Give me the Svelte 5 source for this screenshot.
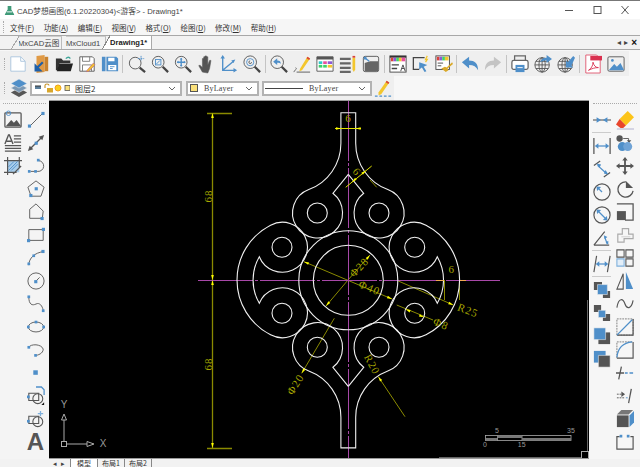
<script>
  const menus = [['文件','F'],['功能','A'],['编辑','E'],['视图','V'],['格式','O'],['绘图','D'],['修改','M'],['帮助','H']];

  // dimension arrow heads: tip position and direction in degrees
  const arrows = [
    [212.500,113,-90],[212.500,280,90],[212.500,280,-90],[212.500,448,90],
    [341,128.500,0],[355.700,128.500,180],
    [352,182,141],[366,170.500,-39],
    [370,255,-49],[326,306,131],
    [304,261.700,203],[392,299,23],
    [301.700,373.300,121],[453.300,305,23.500],
    [405.500,309.300,203],[424,317.300,23],
    [378.300,376.700,235]
  ];

  const labels = [
    ['68',209.500,196,-90],['68',209.500,364,-90],
    ['6',348.500,119,0],['6',356,172.500,50],
    ['Φ28',360,268,-47],['Φ40',369,289,23],
    ['Φ20',296.500,385,-58],['R25',467.500,311.500,21],
    ['Φ8',440.500,325,23],['6',451.700,270.700,0],['R20',371,365,62]
  ];

  const holes = [[317.300,213],[379,213],[282,247.300],[414.700,247.300],[282,313.300],[414.700,313.300],[317.300,347.300],[379,347.300]];
</script>

<div class="app">
  <header class="title">
    <svg class="logo" viewBox="0 0 12 12"><path d="M4 1h4v4l3 5v1H1v-1l3-5z" fill="#3f9a78"/><path d="M3 7h6v1H3z" fill="#fff"/></svg>
    <span class="name">CAD梦想画图(6.1.20220304)&lt;游客&gt; - Drawing1*</span>
    <div class="win">
      <svg viewBox="0 0 10 10"><path d="M1 5.500h8" stroke="#555"/></svg>
      <svg viewBox="0 0 10 10"><rect x="2" y="1.500" width="7" height="7" fill="none" stroke="#555"/></svg>
      <svg viewBox="0 0 10 10"><path d="M1.500 1l7 8M8.500 1l-7 8" stroke="#555"/></svg>
    </div>
  </header>

  <nav class="menu">
    <span class="grip-v"></span>
    {#each menus as [label, key]}
      <span class="menu-item">{label}(<u>{key}</u>)</span>
    {/each}
  </nav>

  <div class="tabs">
    <span class="tab first">MxCAD云图</span>
    <span class="tab second">MxCloud1</span>
    <span class="tab active">Drawing1*</span>
    <div class="tab-ctl"><span>◂</span><span>▸</span><b>×</b></div>
  </div>

  <div class="tb1">
    <div class="strip">
      <span class="grip-v"></span>
      <!-- new -->
      <span class="btn"><svg class="ico" viewBox="0 0 20 20"><path d="M2 2h11l5 5v11H2z" fill="#fff" stroke="#a9c4dc"/><path d="M13 2v5h5" stroke="#a9c4dc"/></svg></span>
      <!-- open drawing -->
      <span class="btn"><svg class="ico" viewBox="0 0 20 20"><path d="M5 1l9-1v19l-9 1z" fill="#e09a45" stroke="none"/><path d="M14 2h4v16h-4z" fill="#c9832f" stroke="none"/><path d="M12 8l-6 6M4 12v5h5z" stroke="#1e5fa8" stroke-width="2.400" fill="#1e5fa8"/></svg></span>
      <!-- folder -->
      <span class="btn"><svg class="ico" viewBox="0 0 20 20"><path d="M1 4h6l2 2h8v3H5l-2 8H1z" fill="#333" stroke="none"/><path d="M4.500 9.500H20l-2.500 8.500H2z" fill="#222" stroke="none"/><path d="M12 4c2-2 4-2 5 0" stroke="#3fa598" stroke-width="1.400"/></svg></span>
      <!-- save with pencil -->
      <span class="btn"><svg class="ico" viewBox="0 0 20 20"><path d="M2 2h14l2 2v14H2z" fill="#fff"/><path d="M5 2v5h8V2M5 18v-7h10v7" stroke="#777"/><path d="M10 17l7-8 2 2-7 7-2.500.5z" fill="#f0c330" stroke="#b58" stroke-width=".6"/></svg></span>
      <!-- save as -->
      <span class="btn"><svg class="ico" viewBox="0 0 20 20"><path d="M1 2h4v16H1zM6 2h11l2 2v14H6z" fill="#4f8fc9" stroke="none"/><path d="M8 3h7v4H8zM8 11h9v6H8z" fill="#fff" stroke="none"/><path d="M10 13h5M10 15h3" stroke="#4f8fc9"/></svg></span>
      <i class="sep"></i>
      <!-- zoom window -->
      <span class="btn"><svg class="ico" viewBox="0 0 20 20"><circle cx="8" cy="9" r="6.500"/><path d="M13 14l6 5" class="hd"/><path d="M11 4h7M14.500 1v6" stroke="#4f8fc9" stroke-dasharray="2 1"/></svg></span>
      <span class="btn"><svg class="ico" viewBox="0 0 20 20"><circle cx="8" cy="8" r="6.500"/><path d="M13 13l6 6" class="hd"/><rect x="5" y="5" width="6" height="6" stroke="#4f8fc9"/><path d="M6 10l4-4" stroke="#4f8fc9"/></svg></span>
      <span class="btn"><svg class="ico" viewBox="0 0 20 20"><circle cx="8" cy="8" r="6.500"/><path d="M13 13l6 6" class="hd"/><path d="M8 3.500v9M3.500 8h9" stroke="#4f8fc9" stroke-width="1.500"/><path d="M8 3l-1.500 2h3zM8 13l-1.500-2h3zM3 8l2-1.500v3zM13 8l-2-1.500v3z" class="bl"/></svg></span>
      <!-- hand -->
      <span class="btn"><svg class="ico" viewBox="0 0 20 20"><path d="M6 19l-4-7 1-1 3 3V4h1.500v6V2H9v8-9h1.500v9-8H12v9l2-5h1.500l-1.500 9-2 5z" fill="#555" stroke="#555" stroke-width=".6"/></svg></span>
      <!-- axes -->
      <span class="btn"><svg class="ico" viewBox="0 0 20 20"><path d="M3 2v15h14M3 17l12-10" stroke="#4f8fc9" stroke-width="1.500"/><path d="M3 0l-2.500 4h5zM19 17l-4-2.500v5zM17 5l-4.500 1 2.500 3z" class="bl"/></svg></span>
      <span class="btn"><svg class="ico" viewBox="0 0 20 20"><circle cx="8" cy="8" r="7"/><circle cx="8" cy="8" r="4" stroke="#4f8fc9"/><path d="M13 13l6 6" class="hd"/><path d="M8 6.500a1.500 1.500 0 1 0 1.500 1.500" stroke="#555"/></svg></span>
      <i class="sep"></i>
      <span class="btn"><svg class="ico" viewBox="0 0 20 20"><circle cx="8" cy="8" r="7"/><path d="M13 13l6 6" class="hd"/><path d="M3.500 7.500L8 3.500v2.500c3 0 4 1 4 4-1-1.500-2-1.500-4-1.500v2.500z" class="bl"/></svg></span>
      <!-- pencil -->
      <span class="btn"><svg class="ico" viewBox="0 0 20 20"><path d="M8 15L16 2l3 2-9 13-3 1z" fill="#f3c62d" stroke="none"/><path d="M16 2l3 2-1 1.500-3-2z" fill="#d9433a" stroke="none"/><path d="M1 19c1-3 4-3 2-5M4 19h15" stroke="#555"/></svg></span>
      <!-- table -->
      <span class="btn"><svg class="ico" viewBox="0 0 20 20"><path d="M1 2h18v16H1z" fill="#fff"/><path d="M1 2h18v3H1z" fill="#555" stroke="none"/><path d="M3 7h4v3H3z" fill="#2fc9c9" stroke="none"/><path d="M8 7h4v3H8z" fill="#e94f9d" stroke="none"/><path d="M13 7h5v3h-5z" fill="#8c5ad6" stroke="none"/><path d="M3 11h4v3H3z" fill="#3ed26a" stroke="none"/><path d="M8 11h4v3H8z" fill="#3ed26a" stroke="none"/><path d="M13 11h5v3h-5z" fill="#f3c62d" stroke="none"/></svg></span>
      <span class="btn"><svg class="ico" viewBox="0 0 20 20"><path d="M1 3h12v2.500H1zM1 8h12v2.500H1zM1 13h12v2.500H1zM1 17.500h12V20H1z" fill="#666" stroke="none"/><path d="M15 3h3v13l-1.500 3-1.500-3z" fill="#f3c62d" stroke="none"/><path d="M15 1h3v2h-3z" fill="#d9433a" stroke="none"/></svg></span>
      <span class="btn"><svg class="ico" viewBox="0 0 20 20"><rect x="1.500" y="1.500" width="17" height="17" rx="2"/><path d="M9 7h9v11H3V9z" fill="#666" stroke="none"/><path d="M3 3l5 4" stroke="#4f8fc9" stroke-width="1.500"/><path d="M2 2h3v3H2z" class="bl"/></svg></span>
      <i class="sep"></i>
      <!-- colour book -->
      <span class="btn"><svg class="ico" viewBox="0 0 20 20"><rect x="1" y="1" width="18" height="18" fill="#fff" stroke="#444"/><path d="M1 1h18v2H1z" fill="#333" stroke="none"/><path d="M2 3h3v4H2z" fill="#d9433a" stroke="none"/><path d="M5 3h3v4H5z" fill="#8c5ad6" stroke="none"/><path d="M8 3h3v4H8z" fill="#3ed26a" stroke="none"/><path d="M11 3h3v4h-3z" fill="#f3c62d" stroke="none"/><path d="M14 3h4v4h-4z" fill="#e94f9d" stroke="none"/><path d="M3 11h8M3 15h6" stroke="#444" stroke-width="1.400"/><path d="M13 18l2.500-7 2.500 7M14 15h3" stroke="#444"/></svg></span>
      <!-- select -->
      <span class="btn"><svg class="ico" viewBox="0 0 20 20"><path d="M14 3H1.500v13H8" stroke="#444" stroke-width="1.400"/><path d="M8 8l9 3-4 2 3 5-2 1-3-5-3 2z" class="bl"/><path d="M17 1l-2 4h2l-2 3" stroke="#f3c62d" stroke-width="1.400"/></svg></span>
      <!-- brush -->
      <span class="btn"><svg class="ico" viewBox="0 0 20 20"><rect x="1" y="1" width="15" height="15" fill="#fff" stroke="#444"/><path d="M2 2h3v4H2z" fill="#d9433a" stroke="none"/><path d="M5 2h3v4H5z" fill="#8c5ad6" stroke="none"/><path d="M8 2h3v4H8z" fill="#3ed26a" stroke="none"/><path d="M11 2h4v4h-4z" fill="#f3c62d" stroke="none"/><path d="M3 9h6M3 12h4" stroke="#444"/><path d="M19 8l1 2-6 5 1 2-3 2-5-4 4-2 2 1z" fill="#d9a92a" stroke="none"/></svg></span>
      <i class="sep"></i>
      <!-- undo redo -->
      <span class="btn"><svg class="ico" viewBox="0 0 20 20"><path d="M1 8l8-6v4c6 0 10 3 10 11-2-4-5-6-10-6v4z" class="bl"/></svg></span>
      <span class="btn"><svg class="ico" viewBox="0 0 20 20"><path d="M19 8l-8-6v4C5 6 1 9 1 17c2-4 5-6 10-6v4z" fill="#c4c4c4" stroke="none"/></svg></span>
      <i class="sep"></i>
      <!-- print -->
      <span class="btn"><svg class="ico" viewBox="0 0 20 20"><path d="M4 6V1h12v5" stroke="#666" stroke-width="1.400"/><rect x="1" y="6" width="18" height="10" rx="2" stroke="#666" stroke-width="1.400" fill="#fff"/><path d="M5 11h10v8H5z" class="bl"/><path d="M7 14h6" stroke="#fff"/></svg></span>
      <!-- globes -->
      <span class="btn"><svg class="ico" viewBox="0 0 20 20"><circle cx="9" cy="11" r="8"/><ellipse cx="9" cy="11" rx="3.500" ry="8"/><path d="M1 11h16M2 7h14M2 15h14M9 3v16"/><path d="M7 8c1-4 4-5 7-5V0l6 4.500L14 9V6c-3 0-5 .5-7 2z" class="bl"/></svg></span>
      <span class="btn"><svg class="ico" viewBox="0 0 20 20"><circle cx="9" cy="11" r="8"/><ellipse cx="9" cy="11" rx="3.500" ry="8"/><path d="M1 11h16M2 7h14M2 15h14M9 3v16"/><path d="M18 1l-6 7-2-2v8h8l-2-2 4-9z" class="bl"/></svg></span>
      <i class="sep"></i>
      <!-- pdf -->
      <span class="btn"><svg class="ico" viewBox="0 0 20 20"><path d="M2 0h12l4 4v16H2z" fill="#fff" stroke="#e0566e"/><path d="M7 1h13v5H7z" fill="#d9304f" stroke="none"/><path d="M5 17c3-2 5-5 5-9 1 4 3 6 6 6-4 0-7 1-11 3z" stroke="#d9304f"/></svg></span>
      <!-- picture -->
      <span class="btn"><svg class="ico" viewBox="0 0 20 20"><rect x="1" y="2" width="18" height="16" rx="1.500"/><path d="M2 17l6-7 3 3 4-4 4 8z" class="bl"/><circle cx="6" cy="6" r="1.500" class="bl"/></svg></span>
    </div>
  </div>

  <div class="tb2">
    <div class="strip2">
      <span class="grip-v"></span>
      <svg class="layers" viewBox="0 0 20 20"><path d="M10 10l9 5-9 5-9-5z" fill="#555"/><path d="M10 5l9 5-9 5-9-5z" fill="#7a98b4" stroke="#eee" stroke-width=".6"/><path d="M10 0l9 5-9 5-9-5z" fill="#4f8fc9" stroke="#eee" stroke-width=".6"/></svg>
      <div class="combo c1">
        <svg class="state" viewBox="0 0 36 10">
          <path d="M1 3h6v3H1z" fill="#5b7f9c"/><path d="M1 3h6" stroke="#333"/>
          <path d="M11 5V2.500c0-2 4-2 4 0" fill="none" stroke="#c8962e" stroke-width="1.200"/><path d="M13 5h6v4.500h-6z" fill="#d9a72c"/>
          <circle cx="24" cy="5" r="3" fill="#fbd01c" stroke="#f0a020"/>
          <rect x="31" y="2.500" width="5" height="5" fill="#fae07a" stroke="#555" stroke-width=".8"/>
        </svg>
        <span class="layer-name">图层2</span>
        <svg class="chev" viewBox="0 0 8 5"><path d="M1 1l3 3 3-3" fill="none" stroke="#666"/></svg>
      </div>
      <div class="combo c2">
        <span class="swatch"></span>
        <span class="by">ByLayer</span>
        <svg class="chev" viewBox="0 0 8 5"><path d="M1 1l3 3 3-3" fill="none" stroke="#666"/></svg>
      </div>
      <div class="combo c3">
        <span class="rule"></span>
        <span class="by">ByLayer</span>
        <svg class="chev" viewBox="0 0 8 5"><path d="M1 1l3 3 3-3" fill="none" stroke="#666"/></svg>
      </div>
      <svg class="pen" viewBox="0 0 20 20"><path d="M5 15L14 2l3 2-9 13-3 1z" fill="#f3c62d"/><path d="M14 2l3 2-1 1.500-3-2z" fill="#d9433a"/><path d="M1 19h18" stroke="#4f8fc9" stroke-width="1.400" stroke-dasharray="3 2"/></svg>
    </div>
  </div>

  <div class="main">
    <aside class="left">
      <span class="grip-h"></span>
      <div class="cols">
        <div class="col">
          <span class="cell"><svg class="ico" viewBox="0 0 20 20"><rect x="1" y="2" width="18" height="16" rx="1" stroke-width="1.400"/><path d="M2 17l6-7 3 3 3-3 5 7z" fill="#555" stroke="none"/><circle cx="5" cy="2.500" r="2.500" stroke="#4f8fc9"/></svg></span>
          <span class="cell"><svg class="ico" viewBox="0 0 20 20"><path d="M1 11L5 1h1l4 10M3 8h5" stroke-width="1.500"/><path d="M11 2h8M11 5.500h8M11 9h8M1 13h18M1 16h18M1 19h18" stroke-width="1.300"/></svg></span>
          <span class="cell"><svg class="ico" viewBox="0 0 20 20"><path d="M4 4h13v13H4z" fill="#a9cdea" stroke="none"/><path d="M5 15L15 5M8 15l7-7M5 11l6-6" stroke="#4f8fc9"/><path d="M0 4h20M0 17h14M4 0v20M17 0v12M10 19l9-9" stroke-width="1.300"/></svg></span>
        </div>
        <div class="col">
          <span class="cell"><svg class="ico" viewBox="0 0 20 20"><path d="M3 17L17 3"/><rect x="1" y="15" width="3.500" height="3.500" class="bl"/><rect x="16" y="1" width="3.500" height="3.500" class="bl"/></svg></span>
          <span class="cell"><svg class="ico" viewBox="0 0 20 20"><path d="M3 17L17 3" stroke-width="1.400"/><path d="M1 19l2-6 4 4zM19 1l-6 2 4 4z" fill="#555" stroke="none"/><rect x="8.500" y="8.500" width="3.500" height="3.500" class="bl"/></svg></span>
          <span class="cell"><svg class="ico" viewBox="0 0 20 20"><path d="M4 16h8a6 6 0 0 0 1-12"/><rect x="1" y="14.500" width="3" height="3" class="bl"/><rect x="8" y="14.500" width="3" height="3" class="bl"/><rect x="11" y="2" width="3" height="3" class="bl"/></svg></span>
          <span class="cell"><svg class="ico" viewBox="0 0 20 20"><path d="M10 1l9 7-3.500 10h-11L1 8z"/><rect x="8.500" y="8" width="3.500" height="3.500" class="bl"/><rect x="2.500" y="15.500" width="3.500" height="3.500" class="bl"/></svg></span>
          <span class="cell"><svg class="ico" viewBox="0 0 20 20"><path d="M10 1l8 8-1 8H3V7z"/><rect x="15" y="15.500" width="3.500" height="3.500" class="bl"/></svg></span>
          <span class="cell"><svg class="ico" viewBox="0 0 20 20"><path d="M2 4h16v12H2z"/><rect x="0" y="14.500" width="3.500" height="3.500" class="bl"/><rect x="16.500" y="2" width="3.500" height="3.500" class="bl"/></svg></span>
          <span class="cell"><svg class="ico" viewBox="0 0 20 20"><path d="M2 18c0-8 7-14 16-15"/><rect x="0.500" y="15" width="3" height="3" class="bl"/><rect x="6" y="6" width="3" height="3" class="bl"/><rect x="16" y="1" width="3.500" height="3.500" class="bl"/></svg></span>
          <span class="cell"><svg class="ico" viewBox="0 0 20 20"><circle cx="10" cy="10" r="9"/><path d="M10 10l4-4" stroke="#555"/><rect x="8" y="9" width="3.500" height="3.500" class="bl"/></svg></span>
          <span class="cell"><svg class="ico" viewBox="0 0 20 20"><path d="M2 2c0 9 4 10 8 8s7 2 8 7"/><rect x="0.500" y="0.500" width="3" height="3" class="bl"/><rect x="16.500" y="16" width="3" height="3" class="bl"/></svg></span>
          <span class="cell"><svg class="ico" viewBox="0 0 20 20"><ellipse cx="10" cy="10" rx="8.500" ry="5.500"/><rect x="8.500" y="3" width="3" height="3" class="bl"/><rect x="0" y="8.500" width="3" height="3" class="bl"/><rect x="17" y="8.500" width="3" height="3" class="bl"/></svg></span>
          <span class="cell"><svg class="ico" viewBox="0 0 20 20"><path d="M2 7c2-4 14-4 16 2 0 5-6 7-9 7"/><rect x="0.500" y="5.500" width="3" height="3" class="bl"/><rect x="8" y="14.500" width="3" height="3" class="bl"/></svg></span>
          <span class="cell"><svg class="ico" viewBox="0 0 20 20"><rect x="7" y="7" width="5" height="5" class="bl"/></svg></span>
          <span class="cell"><svg class="ico" viewBox="0 0 20 20"><path d="M10 0h6l3 3v6" stroke="#4f8fc9" stroke-width="1.400"/><path d="M2 7h11v8H2z" stroke-width="1.200"/><circle cx="12" cy="13" r="5.500" stroke-width="1.200"/><rect x="0" y="9.500" width="3" height="3" class="bl"/><path d="M16 20l3-3v3z" fill="#111" stroke="none"/></svg></span>
          <span class="cell"><svg class="ico" viewBox="0 0 20 20"><path d="M2 7h11v8H2z" stroke-width="1.200"/><circle cx="12" cy="13" r="5.500" stroke-width="1.200"/><rect x="0" y="11" width="3" height="3" class="bl"/><path d="M15 1v6M12 4h6" stroke="#7fb0dc" stroke-width="1.400"/></svg></span>
          <span class="cell"><span class="big-a">A</span></span>
        </div>
      </div>
    </aside>

    <div class="canvas">
      <svg class="drawing" viewBox="49 101 540 357">
        <!-- dimension lines -->
        <g class="dim">
          <path class="long" d="M212.500 113V448M207 113.500H232M207 448.500H232"/>
          <path d="M304 261.700L392 299M398.300 281L453.300 305M396.700 305L433 320"/>
          <path d="M348 280L326 306M348 280L370 255M334.300 318.300L301.700 373.300"/>
          <path d="M378.300 376.700L405 416.700M370 180L376.700 187.300"/>
          <path d="M444.500 280V300M459.500 280V300"/>
        </g>
        <!-- centre lines -->
        <g class="centre">
          <path d="M198 280.500H500" stroke-dasharray="55 2 3 2"/>
          <path d="M348.500 101V458" stroke-dasharray="60 2 3 2"/>
        </g>
        <!-- part outline -->
        <g class="part">
          {#each holes as [x, y]}
            <circle cx={x} cy={y} r="10" />
          {/each}
          <circle cx="348.300" cy="280.300" r="35" />
          <circle cx="348.300" cy="280.300" r="49.500" />
          <path d="M348.300 112.700H355.700V143.300A49.400 49.400 0 0 0 387.800 189.600A25 25 0 1 1 363.700 193.300L348.300 174.300" />
          <path d="M348.300 112.700H340.900V143.300A49.400 49.400 0 0 1 308.800 189.600A25 25 0 1 0 332.900 193.300L348.300 174.300" />
          <path d="M348.300 447.900H355.700V417.300A49.400 49.400 0 0 1 387.800 371A25 25 0 1 0 363.700 367.300L348.300 386.300" />
          <path d="M348.300 447.900H340.900V417.300A49.400 49.400 0 0 0 308.800 371A25 25 0 1 1 332.900 367.300L348.300 386.300" />
          <path d="M426 225.200A25 25 0 1 0 437.300 256.700A46.700 46.700 0 0 1 437.300 303.300A25 25 0 1 0 426 334.800A61.500 61.500 0 0 0 426 225.200Z" />
          <path d="M270.600 225.200A25 25 0 1 1 259.300 256.700A46.700 46.700 0 0 0 259.300 303.300A25 25 0 1 1 270.600 334.800A61.500 61.500 0 0 1 270.600 225.200Z" />
        </g>
        <!-- bright dimension bits -->
        <g class="hot">
          <path d="M335 128.500H361M345.700 187.300L371.700 166" />
          <path class="warm" d="M436 280.500H444M460 280.500H466" />
          {#each arrows as [x, y, a]}
            <polygon points="0,0 -5,-1.300 -5,1.300" transform="translate({x} {y}) rotate({a})" />
          {/each}
        </g>
        {#each labels as [text, x, y, a]}
          <text class="dim-text" x={x} y={y} transform="rotate({a} {x} {y})">{text}</text>
        {/each}
        <!-- UCS icon -->
        <g class="ucs">
          <rect x="61.500" y="441.500" width="5" height="5" />
          <path d="M64 441V420M66.500 444H87" />
          <path d="M64 414l-2.500 6h5zM94 444l-7-2.500v5z" />
          <text x="64" y="405">Y</text>
          <text x="103" y="444">X</text>
        </g>
        <!-- scale bar -->
        <g class="scale">
          <rect x="485.500" y="435.500" width="85.500" height="5" />
          <path d="M497.500 435.500v5M522 435.500v5" />
          <rect class="bar" x="486" y="438" width="11" height="2.500" />
          <rect class="bar" x="497.500" y="435.500" width="24.500" height="2.500" />
          <rect class="bar" x="522" y="438" width="49" height="2.500" />
          <text x="497" y="431">5</text>
          <text x="571" y="431">35</text>
          <text x="485" y="445">0</text>
          <text x="521.700" y="445">15</text>
        </g>
        <path d="M587.500 300V452M439 457.500H581" fill="none" stroke="#666" />
        <rect x="581.500" y="451.500" width="7" height="7" fill="none" stroke="#aaa" />
      </svg>
    </div>

    <aside class="right">
      <span class="grip-h"></span>
      <div class="cols">
        <div class="col">
          <span class="cell"><svg class="ico" viewBox="0 0 20 20"><path d="M0 10h20" stroke-width="1.200"/><path d="M9 10L4 7v6zM11 10l5-3v6z" class="bl"/></svg></span>
          <i class="hr"></i>
          <span class="cell"><svg class="ico" viewBox="0 0 20 20"><path d="M1 1v18M19 1v18" stroke-width="1.400"/><path d="M4 10h12" stroke="#4f8fc9" stroke-width="1.400"/><path d="M2 10l4-3v6zM18 10l-4-3v6z" class="bl"/></svg></span>
          <span class="cell"><svg class="ico" viewBox="0 0 20 20"><path d="M1 6l7-5M12 19l7-5" stroke-width="1.300"/><path d="M5 6l10 9" stroke="#4f8fc9" stroke-width="1.400"/><path d="M4 4l5 1-2 4zM17 16l-5-1 2-4z" class="bl"/></svg></span>
          <span class="cell"><svg class="ico" viewBox="0 0 20 20"><circle cx="10" cy="10" r="9" stroke-width="1.300"/><path d="M10 10L6 6" stroke="#4f8fc9" stroke-width="1.400"/><path d="M4 4l5 .5L4.500 9z" class="bl"/></svg></span>
          <span class="cell"><svg class="ico" viewBox="0 0 20 20"><circle cx="10" cy="10" r="9" stroke-width="1.300"/><path d="M5 5l10 10" stroke="#4f8fc9" stroke-width="1.400"/><path d="M4 4l5 .5L4.500 9zM16 16l-5-.5 4.500-4.500z" class="bl"/></svg></span>
          <span class="cell"><svg class="ico" viewBox="0 0 20 20"><path d="M1 18h17M1 18L13 3" stroke-width="1.300"/><path d="M13 9l3 8" stroke="#4f8fc9" stroke-width="1.400"/><path d="M12 7l4 2-3 2zM17 17l-3-2 3-2z" class="bl"/></svg></span>
          <i class="hr"></i>
          <span class="cell"><svg class="ico" viewBox="0 0 20 20"><path d="M4 1L1 19M19 1l-3 18" stroke-width="1.300"/><path d="M5 10h10" stroke="#4f8fc9" stroke-width="1.400"/><path d="M3 10l4-3v6zM17 10l-4-3v6z" class="bl"/></svg></span>
          <i class="hr"></i>
          <span class="cell"><svg class="ico" viewBox="0 0 20 20"><path d="M1 1h9v9H1zM11 11h8v8h-8z" fill="#555" stroke="none"/><path d="M5 4h11v11H5z" fill="#4f8fc9" stroke="#eee" stroke-width=".6"/></svg></span>
          <span class="cell"><svg class="ico" viewBox="0 0 20 20"><path d="M1 1h8v8H1zM11 11h8v8h-8z" fill="#555" stroke="none"/><path d="M6 7h8v8H6z" fill="#4f8fc9" stroke="#eee" stroke-width=".6"/></svg></span>
          <span class="cell"><svg class="ico" viewBox="0 0 20 20"><path d="M6 6h13v13H6z" fill="#555" stroke="none"/><path d="M1 1h13v13H1z" fill="#4f8fc9" stroke="#eee" stroke-width=".6"/></svg></span>
          <span class="cell"><svg class="ico" viewBox="0 0 20 20"><path d="M1 1h13v13H1z" fill="#4f8fc9" stroke="none"/><path d="M6 6h13v13H6z" fill="#555" stroke="#eee" stroke-width=".6"/></svg></span>
        </div>
        <div class="col">
          <span class="cell"><svg class="ico" viewBox="0 0 20 20"><path d="M13 0l7 7-9 9-7-7z" fill="#fcc419" stroke="none"/><path d="M4 9l7 7-3 3-3 0-5-4z" fill="#e8452c" stroke="none"/><path d="M1 20h19" stroke="#aac" /></svg></span>
          <span class="cell"><svg class="ico" viewBox="0 0 20 20"><circle cx="4" cy="5" r="3.500" fill="#555" stroke="none"/><path d="M8 5h6v3"/><path d="M12 7h5l-2.500 3z" fill="#555" stroke="none"/><circle cx="7" cy="14" r="5" class="bl"/><circle cx="13" cy="14" r="5" fill="#6fa3d6" stroke="none"/></svg></span>
          <span class="cell"><svg class="ico" viewBox="0 0 20 20"><path d="M10 0l3 4h-2v5h5V7l4 3-4 3v-2h-5v5h2l-3 4-3-4h2v-5H4v2l-4-3 4-3v2h5V4H7z" fill="#555" stroke="none"/></svg></span>
          <span class="cell"><svg class="ico" viewBox="0 0 20 20"><path d="M11 2a8.500 8.500 0 1 0 8 10" stroke-width="1.400"/><path d="M11 9V1l8 8z" fill="#555" stroke="none"/></svg></span>
          <span class="cell"><svg class="ico" viewBox="0 0 20 20"><path d="M1 1h18v18h-9" stroke-width="1.400"/><path d="M1 9h10v10H1z" fill="#555" stroke="none"/></svg></span>
          <span class="cell"><svg class="ico" viewBox="0 0 20 20"><path d="M2 18V9h5V3h7v6h5v5H9v4z" stroke="#aaa" stroke-width="1.300"/><path d="M6 12h10" stroke="#ccc"/></svg></span>
          <span class="cell"><svg class="ico" viewBox="0 0 20 20"><path d="M1 1h8v8H1zM11 1h8v8h-8zM11 11h8v8h-8z" stroke-width="1.200"/><path d="M1 11h8v8H1z" fill="#e3eef8" stroke="#7fb0dc" stroke-width="1.200"/></svg></span>
          <span class="cell"><svg class="ico" viewBox="0 0 20 20"><path d="M8 2L1 19h7z" stroke-width="1.200"/><path d="M11 0l8 19h-8z" class="bl"/></svg></span>
          <span class="cell"><svg class="ico" viewBox="0 0 20 20"><path d="M1 14C3 2 8 4 10 10s7 6 9-4" stroke-width="1.300"/></svg></span>
          <span class="cell"><svg class="ico" viewBox="0 0 20 20"><path d="M1 1h18v18H1z" stroke-dasharray="2 1" stroke="#777"/><path d="M19 1v18H1" stroke-width="1.300"/><path d="M1 19L18 2" stroke="#4f8fc9" stroke-width="1.400"/></svg></span>
          <span class="cell"><svg class="ico" viewBox="0 0 20 20"><path d="M1 19V1h18" stroke-dasharray="2 1" stroke="#777"/><path d="M1 19h18V1" stroke-width="1.300"/><path d="M1 18C2 8 8 2 18 1" stroke="#4f8fc9" stroke-width="1.400"/></svg></span>
          <span class="cell"><svg class="ico" viewBox="0 0 20 20"><path d="M6 3L3 17M0 10h9" stroke-width="1.400"/><path d="M10 10h3M15 10h4" stroke="#4f8fc9" stroke-width="1.400"/></svg></span>
          <span class="cell"><svg class="ico" viewBox="0 0 20 20"><path d="M1 8h8M1 12h8" stroke="#555" stroke-dasharray="2 1"/><path d="M17 2l-3 16" stroke-width="1.400"/><path d="M6 5l4 3-4 3z" fill="#555" stroke="none"/><path d="M11 12h2" stroke="#4f8fc9"/></svg></span>
          <span class="cell"><svg class="ico" viewBox="0 0 20 20"><path d="M1 6h13v13H1z" fill="#555" stroke="none"/><path d="M1 5l5-5h13l-5 5z" fill="#777" stroke="none"/><path d="M15 6l5-5v13l-5 5z" class="bl"/></svg></span>
          <span class="cell"><svg class="ico" viewBox="0 0 20 20"><path d="M4 4H1v14h18V4h-3" stroke-width="1.300"/><rect x="4" y="2" width="3" height="3" class="bl"/><rect x="12" y="2" width="3" height="3" class="bl"/></svg></span>
        </div>
      </div>
    </aside>
  </div>

  <footer class="sheets">
    <span class="nav">◂</span>
    <span class="nav">▸</span>
    <span class="sheet cur">模型</span>
    <span class="sheet">布局1</span>
    <span class="sheet">布局2</span>
  </footer>
</div>

<style>
  :global(body) {
    margin: 0;
    background: #f7f7f7;
  }

  .app {
    width: 640px;
    height: 467px;
    overflow: hidden;
    display: flex;
    flex-direction: column;
    font-family: "Noto Sans CJK SC", "Liberation Sans", sans-serif;
    color: #333;
    background: #f7f7f7;
  }

  .title {
    height: 18px;
    flex: none;
    display: flex;
    align-items: center;
    background: #fff;
    border-top: 1px solid #777;
    font-size: 7.700px;
    padding-left: 4px;
    gap: 2px;
  }

  .logo {
    width: 11px;
    height: 11px;
  }

  .name {
    font-family: "Liberation Sans", "Noto Sans CJK SC", sans-serif;
    color: #444;
  }

  .win {
    margin-left: auto;
    display: flex;
    gap: 18px;
    padding-right: 10px;
  }

  .win svg {
    width: 10px;
    height: 10px;
  }

  .menu {
    height: 16px;
    flex: none;
    display: flex;
    align-items: center;
    gap: 9.400px;
    background: #f6f6f6;
    font-size: 7.500px;
    padding-left: 3px;
  }

  .menu-item {
    white-space: nowrap;
    flex: none;
  }

  .menu .grip-v {
    margin-right: -4.400px;
  }

  .grip-v {
    width: 1px;
    height: 12px;
    flex: none;
    border-left: 1px dotted #aaa;
  }

  .tabs {
    height: 15px;
    flex: none;
    display: flex;
    align-items: flex-end;
    box-sizing: border-box;
    background: #f2f2f2;
    border-top: 1px solid #a8a8a8;
    border-bottom: 1px solid #a8a8a8;
    padding-left: 18px;
    font-family: "Liberation Sans", "Noto Sans CJK SC", sans-serif;
    font-size: 7.600px;
  }

  .tab {
    height: 13px;
    line-height: 13px;
    position: relative;
    color: #444;
    white-space: nowrap;
    box-sizing: border-box;
    border-top: 1px solid #ccc;
    border-right: 1px solid #bbb;
  }

  .first {
    width: 44px;
  }

  .second {
    width: 40px;
    margin-left: 4px;
  }

  .tab.active {
    width: 43px;
    background: #fff;
    font-weight: 700;
    color: #222;
    margin-left: 3px;
    padding-left: 1px;
    height: 14px;
    line-height: 14px;
    border-color: #aaa;
  }

  .tab.active::before,
  .tab.first::before {
    content: "";
    position: absolute;
    left: -7px;
    top: -1px;
    bottom: 0;
    width: 8px;
    background: linear-gradient(to bottom right, transparent 48%, #aaa 48%, #aaa 56%, #f2f2f2 56%);
  }

  .tab.active::before {
    background: linear-gradient(to bottom right, transparent 48%, #888 48%, #888 56%, #fff 56%);
  }

  .tab-ctl {
    margin-left: auto;
    display: flex;
    gap: 3px;
    padding-right: 3px;
    align-self: center;
    font-size: 8px;
    line-height: 12px;
    color: #444;
  }

  .tab-ctl b {
    color: #111;
    font-size: 10px;
  }

  .tb1 {
    height: 26px;
    flex: none;
    display: flex;
    padding-top: 1px;
    box-sizing: border-box;
    background: #f7f7f7;
  }

  .strip {
    width: 629px;
    height: 25px;
    display: flex;
    align-items: center;
    background: #efefef;
    padding-left: 4px;
    box-sizing: border-box;
  }

  .btn {
    width: 23.100px;
    display: flex;
    justify-content: center;
    flex: none;
  }

  .ico {
    width: 18px;
    height: 18px;
    fill: none;
    stroke: #555;
    stroke-width: 1;
    overflow: visible;
  }

  .ico .hd {
    stroke: #444;
    stroke-width: 2.500;
  }

  .ico .bl {
    fill: #4f8fc9;
    stroke: none;
  }

  .sep {
    width: 2.500px;
    height: 18px;
    flex: none;
    box-sizing: border-box;
    border-left: 1px solid #c4c4c4;
    margin-left: 1px;
  }

  .tb2 {
    height: 24px;
    flex: none;
    background: #f7f7f7;
  }

  .strip2 {
    width: 394px;
    height: 24px;
    display: flex;
    align-items: center;
    background: #efefef;
    padding-left: 4px;
    box-sizing: border-box;
  }

  .layers {
    width: 18px;
    height: 18px;
    margin-left: 4px;
    margin-right: 2px;
    flex: none;
  }

  .combo {
    height: 15px;
    box-sizing: border-box;
    background: #fff;
    border: 2px solid #b2b2b2;
    display: flex;
    align-items: center;
    flex: none;
  }

  .c1 {
    width: 152px;
    padding-left: 2px;
  }

  .c2 {
    width: 73px;
    margin-left: 4px;
    padding-left: 2px;
  }

  .c3 {
    width: 110px;
    margin-left: 3px;
    padding-left: 1px;
  }

  .state {
    width: 36px;
    height: 10px;
    flex: none;
  }

  .layer-name {
    font-size: 8px;
    margin-left: 5px;
    color: #333;
  }

  .swatch {
    width: 6px;
    height: 6px;
    background: #fae07a;
    border: 1px solid #555;
    flex: none;
  }

  .by {
    font-family: "Liberation Serif", serif;
    font-size: 8px;
    color: #444;
    letter-spacing: 0.200px;
    margin-left: 6px;
  }

  .rule {
    width: 38px;
    height: 1px;
    background: #444;
    flex: none;
  }

  .chev {
    width: 8px;
    height: 5px;
    margin-left: auto;
    margin-right: 4px;
    flex: none;
  }

  .pen {
    width: 18px;
    height: 18px;
    margin-left: 2px;
    flex: none;
  }

  .main {
    flex: 1;
    display: flex;
    min-height: 0;
  }

  .left {
    width: 49px;
    flex: none;
    box-sizing: border-box;
    padding-top: 3px;
    background: #f4f4f4;
  }

  .right {
    width: 51px;
    flex: none;
    box-sizing: border-box;
    padding: 3px 0 0 1px;
    background: #f6f6f6;
  }

  .grip-h {
    display: block;
    height: 0;
    margin: 0 3px 4px;
    border-top: 1px dotted #aaa;
  }

  .cols {
    display: flex;
  }

  .left .cols {
    padding-left: 1px;
  }

  .col {
    width: 23px;
    display: flex;
    flex-direction: column;
  }

  .cell {
    height: 23px;
    display: flex;
    align-items: center;
    justify-content: center;
    flex: none;
  }

  .hr {
    height: 0;
    margin: 1px 2px;
    border-top: 1px solid #ccc;
  }

  .big-a {
    font-family: "Liberation Sans", sans-serif;
    font-weight: 700;
    font-size: 24px;
    line-height: 23px;
    color: #555;
  }

  .canvas {
    flex: 1;
    min-width: 0;
    box-sizing: border-box;
    background: #000;
    border-top: 1px solid #999;
    border-bottom: 1px solid #999;
    overflow: hidden;
  }

  .drawing {
    display: block;
    width: 100%;
    height: 100%;
  }

  .dim {
    fill: none;
    stroke: #8a8a00;
    stroke-width: 1;
  }

  .dim .long {
    stroke-width: 1.300;
  }

  .centre {
    fill: none;
    stroke: #a848a8;
    stroke-width: 1;
  }

  .part {
    fill: none;
    stroke: #f0f0f0;
    stroke-width: 1.100;
  }

  .hot {
    fill: #ffff00;
    stroke: none;
  }

  .hot path {
    stroke: #e0e000;
    stroke-width: 1;
    fill: none;
  }

  .hot .warm {
    stroke: #f0a850;
  }

  .dim-text {
    fill: #a8a800;
    font-family: "Liberation Serif", serif;
    font-size: 11px;
    letter-spacing: 1px;
    text-anchor: middle;
    dominant-baseline: middle;
  }

  .ucs {
    fill: none;
    stroke: #aaa;
    stroke-width: 1;
  }

  .ucs text,
  .scale text {
    fill: #999;
    stroke: none;
    font-family: "Liberation Sans", sans-serif;
    text-anchor: middle;
    dominant-baseline: middle;
  }

  .ucs text {
    font-size: 10px;
  }

  .scale text {
    font-size: 7px;
  }

  .scale {
    fill: none;
    stroke: #aaa;
    stroke-width: 0.800;
  }

  .scale .bar {
    fill: #777;
    stroke: none;
  }

  .sheets {
    height: 8px;
    flex: none;
    display: flex;
    align-items: flex-start;
    background: #f2f2f2;
    padding-left: 51px;
    font-size: 7px;
    line-height: 8px;
    overflow: hidden;
  }

  .nav {
    width: 8px;
    text-align: center;
    font-size: 7px;
    color: #444;
  }

  .sheet {
    width: 22px;
    height: 8px;
    overflow: hidden;
    text-align: center;
    padding: 0 2px;
    border-right: 1px solid #888;
  }

  .sheet.cur {
    margin-left: 3px;
    border-left: 1px solid #888;
    background: #fff;
  }
</style>
